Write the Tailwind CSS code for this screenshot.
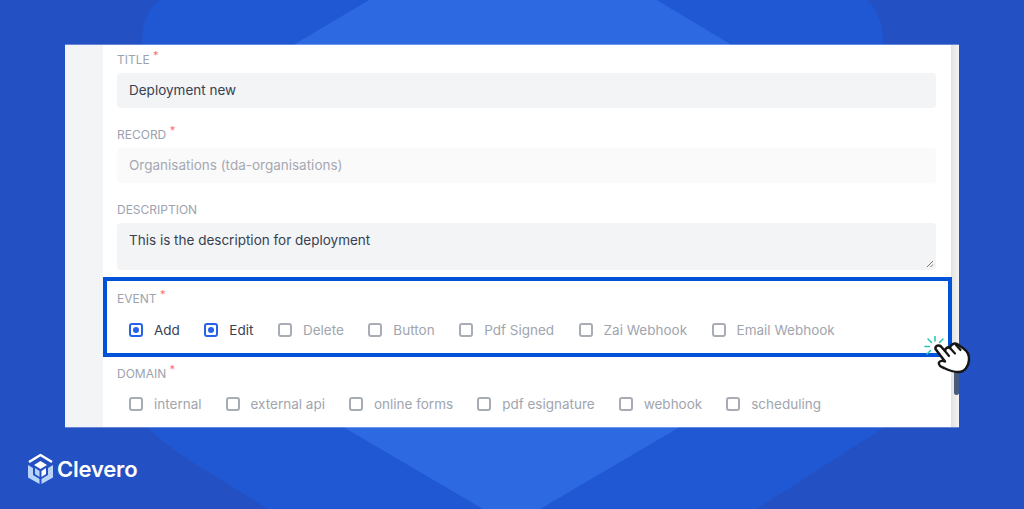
<!DOCTYPE html>
<html lang="en">
<head>
  <meta charset="UTF-8" />
  <title>Clevero - Automation form</title>
  <script src="https://cdn.jsdelivr.net/npm/@tailwindcss/browser@4"></script>
</head>
<body class="relative h-[509px] w-[1024px] overflow-hidden bg-[#2350c2] font-['Inter',sans-serif]">
  <!-- background shapes -->
  <svg class="absolute inset-0" width="1024" height="509" viewBox="0 0 1024 509">
    <path d="M142 44 C142 20 150 6 164 -4 L862 -4 C876 6 883 20 883 44 L883 428 L757 509 L268 509 L197 465 Q165 445 148 428 Z" fill="#2058d4"/>
    <path d="M376 -4 L650 -4 L730 44 L678 428 L540 509 L483 509 L345 428 L295 44 Z" fill="#2d6ae2"/>
  </svg>

  <div class="absolute left-[65px] top-[44px] flex h-[384px] w-[894px] overflow-hidden border-y border-white/30 bg-white bg-clip-padding">
    <div class="w-[38px] bg-[#f3f4f6]"></div>

    <form class="flex-1 pl-[14px] pr-[15px] pt-[7px]">
      <div class="mb-[19px]">
        <label class="mb-[5px] block h-4 text-xs leading-4 text-[#9ca3af]">TITLE <sup class="text-[11px] text-[#f87171]">*</sup></label>
        <div class="flex h-[35px] items-center rounded bg-[#f3f4f6] px-3 text-[13.5px] text-[#374151]">Deployment new</div>
      </div>
      <div class="mb-[19px]">
        <label class="mb-[5px] block h-4 text-xs leading-4 text-[#9ca3af]">RECORD <sup class="text-[11px] text-[#f87171]">*</sup></label>
        <div class="flex h-[35px] items-center rounded bg-[#fafafb] px-3 text-[13.5px] text-[#a5a9b2]">Organisations (tda-organisations)</div>
      </div>
      <div class="mb-[21px]">
        <label class="mb-[5px] block h-4 text-xs leading-4 text-[#9ca3af]">DESCRIPTION</label>
        <div class="relative h-[47px] rounded bg-[#f3f4f6] px-3 pt-[7px] text-[13.5px] leading-5 text-[#374151]">This is the description for deployment
          <svg class="absolute bottom-[2px] right-[2px]" width="8" height="8" viewBox="0 0 8 8" fill="none" stroke="#777" stroke-width="1"><path d="M1 7 7 1M4.500 7 7 4.500"/></svg>
        </div>
      </div>

      <div class="mb-[28px]">
        <label class="mb-[15px] block h-4 text-xs leading-4 text-[#9ca3af]">EVENT <sup class="text-[11px] text-[#f87171]">*</sup></label>
        <div class="flex h-4 items-center pl-3 text-[13.5px] text-[#a1a5ae]">
          <span class="mr-[24.5px] flex items-center gap-[11px] text-[#374151]"><span class="flex size-[14px] items-center justify-center rounded-[3px] border-2 border-[#2563eb]"><span class="size-[6px] rounded-full bg-[#2563eb]"></span></span>Add</span>
          <span class="mr-[24.5px] flex items-center gap-[11px] text-[#374151]"><span class="flex size-[14px] items-center justify-center rounded-[3px] border-2 border-[#2563eb]"><span class="size-[6px] rounded-full bg-[#2563eb]"></span></span>Edit</span>
          <span class="mr-[24.5px] flex items-center gap-[11px]"><span class="size-[14px] rounded-[3px] border-2 border-[#a8acb5]"></span>Delete</span>
          <span class="mr-[24.5px] flex items-center gap-[11px]"><span class="size-[14px] rounded-[3px] border-2 border-[#a8acb5]"></span>Button</span>
          <span class="mr-[24.5px] flex items-center gap-[11px]"><span class="size-[14px] rounded-[3px] border-2 border-[#a8acb5]"></span>Pdf Signed</span>
          <span class="mr-[24.5px] flex items-center gap-[11px]"><span class="size-[14px] rounded-[3px] border-2 border-[#a8acb5]"></span>Zai Webhook</span>
          <span class="flex items-center gap-[11px]"><span class="size-[14px] rounded-[3px] border-2 border-[#a8acb5]"></span>Email Webhook</span>
        </div>
      </div>

      <div>
        <label class="mb-[14px] block h-4 text-xs leading-4 text-[#9ca3af]">DOMAIN <sup class="text-[11px] text-[#f87171]">*</sup></label>
        <div class="flex h-4 items-center pl-3 text-[13.5px] text-[#a1a5ae]">
          <span class="mr-6 flex items-center gap-[11px]"><span class="size-[14px] rounded-[3px] border-2 border-[#a8acb5]"></span>internal</span>
          <span class="mr-6 flex items-center gap-[11px]"><span class="size-[14px] rounded-[3px] border-2 border-[#a8acb5]"></span>external api</span>
          <span class="mr-6 flex items-center gap-[11px]"><span class="size-[14px] rounded-[3px] border-2 border-[#a8acb5]"></span>online forms</span>
          <span class="mr-6 flex items-center gap-[11px]"><span class="size-[14px] rounded-[3px] border-2 border-[#a8acb5]"></span>pdf esignature</span>
          <span class="mr-6 flex items-center gap-[11px]"><span class="size-[14px] rounded-[3px] border-2 border-[#a8acb5]"></span>webhook</span>
          <span class="flex items-center gap-[11px]"><span class="size-[14px] rounded-[3px] border-2 border-[#a8acb5]"></span>scheduling</span>
        </div>
      </div>
    </form>

    <!-- scrollbar -->
    <div class="relative w-2 bg-gradient-to-r from-[#e2e2e2] to-[#f4f4f4]">
      <div class="absolute left-[3px] top-[319px] h-[31px] w-[5px] rounded-b-sm bg-[#475a80]"></div>
    </div>
  </div>

  <!-- highlight box -->
  <div class="absolute left-[103px] top-[277px] h-[80px] w-[849px] border-4 border-[#0052d9]"></div>

  <!-- cursor -->
  <svg class="absolute left-[924px] top-[336px]" width="50" height="42" viewBox="0 0 50 42" fill="none">
    <g stroke="#1fc7b6" stroke-width="1.500" stroke-linecap="round">
      <path d="M11 0.500V5M4 3 7.500 6.500M19 3 15.500 6.500M1 10.500H5.500M3 18 6.500 14.500"/>
    </g>
    <path d="M11.500 13C11 9.500 15 8.500 17 10.500L21 15C21 12 24 10.500 26 12C26 9 30 6.500 33 8L39.500 12.500C43 15 45.500 19 45 24C44.500 30 41 36 34.500 36C29 36 24 34 20 32C17 31 14 29 15 26.500C16 24.500 19 24.500 21 25.500Z" fill="#fff" stroke="#161616" stroke-width="2.500" stroke-linejoin="round"/>
    <path d="M21 15 25 20M26 12 31 17.500M32 9 36.500 14" stroke="#161616" stroke-width="2.200" stroke-linecap="round"/>
  </svg>

  <!-- logo -->
  <div class="absolute left-[27px] top-[453px] flex items-center gap-[3px]">
    <svg width="27" height="32" viewBox="0 0 27 32" fill="none">
      <path d="M2 9 13.500 2 25 9" stroke="#fff" stroke-width="2.500" stroke-linejoin="round"/>
      <path d="M13.500 8 20 12 13.500 16 7 12Z" fill="#fff"/>
      <path d="M1 12 6 15V22L12.500 26V31L1 24.500Z" fill="#b9d4fb"/>
      <path d="M26 12V24.500L14.500 31V26L21 22V15Z" fill="#b9d4fb"/>
      <path d="M8 15 12.500 18V24L8 21Z" fill="#b9d4fb"/>
      <path d="M19 15 14.500 18V24L19 21Z" fill="#fff"/>
    </svg>
    <span class="text-[22px] font-semibold leading-8 tracking-[-0.2px] text-white">Clevero</span>
  </div>
</body>
</html>
